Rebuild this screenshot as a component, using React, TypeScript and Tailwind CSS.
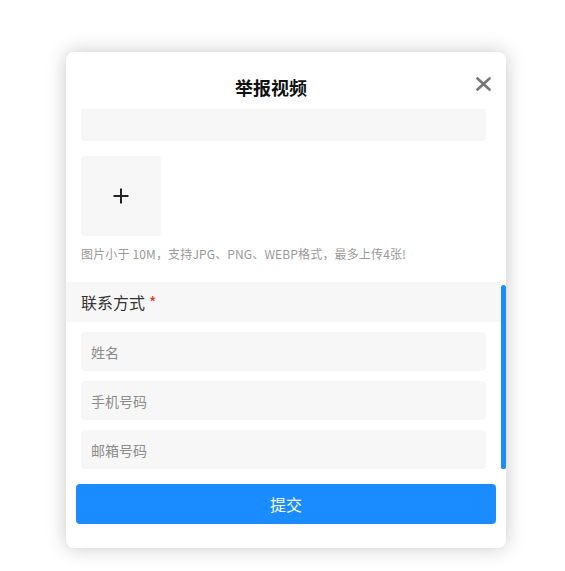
import React from 'react';

const SectionTitle: React.FC<{ label: string; required?: boolean }> = ({ label, required }) => (
  <div className="h-10 bg-[#f7f7f7] px-[15px] flex items-center text-[16px] text-[#333]">
    {label}
    {required && <span className="ml-1 text-[#f5222d]">*</span>}
  </div>
);

const Field: React.FC<{ placeholder: string }> = ({ placeholder }) => (
  <input
    placeholder={placeholder}
    className="block w-full h-[39px] bg-[#f7f7f7] rounded-[4px] px-[10px] text-[14px] text-[#333] placeholder:text-[#8c8c8c] outline-none"
  />
);

export default function App() {
  return (
    <div
      className="min-h-[571px] bg-white pt-[52px] pl-[66px]"
      style={{ fontFamily: '"Noto Sans CJK SC", "Noto Sans", sans-serif' }}
    >
      <div className="w-[440px] h-[496px] bg-white rounded-[8px] shadow-[0_0_20px_rgba(0,0,0,0.22)] flex flex-col">
        {/* Header */}
        <div className="flex items-start h-[56px] shrink-0">
          <h2 className="flex-1 text-center pt-[23px] text-[18px] leading-6 font-bold text-[#111]">举报视频</h2>
          <button className="w-[30px] pt-[25px] flex text-[#777]">
            <svg width="15" height="14" viewBox="0 0 15 14" fill="none" stroke="currentColor" strokeWidth="2.6" strokeLinecap="round">
              <path d="M1.5 1.5 L13.5 12.5 M13.5 1.5 L1.5 12.5" />
            </svg>
          </button>
        </div>

        {/* Form body, shown scrolled to its end */}
        <div className="h-[361px] shrink-0 flex overflow-hidden">
          <div className="flex-1 flex flex-col justify-end">
            <div className="px-[15px]">
              {/* lower edge of the description box, the rest is scrolled away */}
              <div className="h-[32px] bg-[#f7f7f7] rounded-b-[4px]" />
              <div className="mt-[15px] w-20 h-20 rounded-[4px] bg-[#f7f7f7] flex items-center justify-center">
                <svg width="16" height="16" viewBox="0 0 16 16" fill="none" stroke="#222" strokeWidth="2">
                  <path d="M8 0.5 V15.5 M0.5 8 H15.5" />
                </svg>
              </div>
              <p className="mt-[9px] mb-[19px] text-[12px] leading-[18px] text-[#999] tracking-[0.15px]">
                图片小于 10M，支持JPG、PNG、WEBP格式，最多上传4张!
              </p>
            </div>

            <SectionTitle label="联系方式" required />
            <div className="px-[15px] pt-[10px] flex flex-col gap-[10px]">
              <Field placeholder="姓名" />
              <Field placeholder="手机号码" />
              <Field placeholder="邮箱号码" />
            </div>
          </div>
          {/* scrollbar */}
          <div className="w-[5px] flex flex-col justify-end">
            <div className="h-[184px] bg-[#1a8cff] rounded-t-[3px] rounded-b-[2px]" />
          </div>
        </div>

        {/* Footer */}
        <div className="px-[10px] pt-[15px]">
          <button className="w-full h-10 rounded-[4px] bg-[#1a8cff] text-white text-[16px]">提交</button>
        </div>
      </div>
    </div>
  );
}
